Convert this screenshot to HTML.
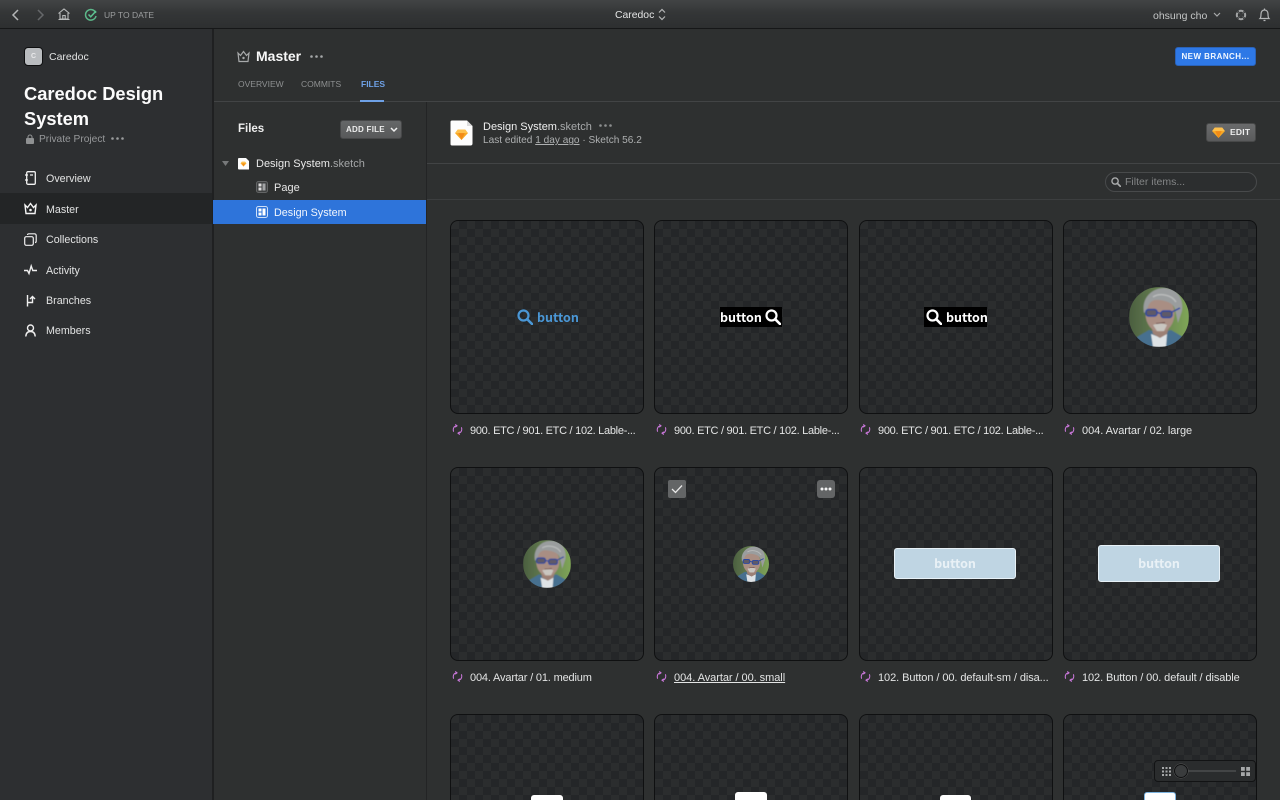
<!DOCTYPE html>
<html lang="en"><head><meta charset="utf-8"><title>Caredoc</title>
<style>
*{box-sizing:border-box}
html,body{margin:0;padding:0;width:1280px;height:800px;overflow:hidden;background:#2e3030}
body{font-family:"Liberation Sans","DejaVu Sans",sans-serif;color:#e8e9e9}
#root{position:relative;width:1280px;height:800px;overflow:hidden;background:#2e3030}
.a{position:absolute;white-space:nowrap}
svg{position:absolute;overflow:visible}
.card{position:absolute;width:194px;height:194px;border-radius:8px;border:1px solid #0f1011;
background-color:#2b2d2e;
background-image:linear-gradient(45deg,#242628 25%,transparent 25%,transparent 75%,#242628 75%),linear-gradient(45deg,#242628 25%,transparent 25%,transparent 75%,#242628 75%);
background-size:16px 16px;background-position:0 0,8px 8px;overflow:hidden}
.r3{height:86px;border-bottom:0;border-radius:8px 8px 0 0}
.lab{position:absolute;font-size:11px;line-height:14px;color:#e4e5e5;white-space:nowrap}
.e{letter-spacing:-.28px}
.nav{font-size:10.700px;color:#e2e3e3;line-height:14px}
.btn{position:absolute;width:122px;background:#bfd5e3;border:1px solid #e7f1f7;border-radius:3px;color:#e9f1f6;font-family:"Noto Sans CJK JP","Liberation Sans",sans-serif;font-weight:bold;font-size:12.500px;text-align:center}
.bt{font-family:"Noto Sans CJK JP","Liberation Sans",sans-serif;font-weight:bold;font-size:12.500px}
.tab{font-size:8.500px;line-height:12px;color:#8e9091}
</style></head><body>
<div id="root">

<svg width="0" height="0" style="position:absolute"><defs>
<linearGradient id="av" x1="0" y1="0" x2="1" y2="0"><stop offset="0" stop-color="#4b5f40"/><stop offset=".5" stop-color="#667f50"/><stop offset="1" stop-color="#7fa657"/></linearGradient>
<clipPath id="cc"><circle cx="30" cy="30" r="30"/></clipPath>
<filter id="soft"><feGaussianBlur stdDeviation=".5"/></filter>
<symbol id="avatar" viewBox="0 0 60 60">
<g clip-path="url(#cc)"><g filter="url(#soft)"><rect width="60" height="60" fill="url(#av)"/>
<path d="M4 60 8 50 20 43 30 46 42 43 54 50 58 60Z" fill="#47708f"/>
<path d="M22 47 30 50 38 47 37 60H24Z" fill="#dfe3e6"/>
<path d="M22 38 24 47 31 51 38 47 41 37Z" fill="#9c8074"/>
<ellipse cx="31" cy="27" rx="14.500" ry="18" fill="#a98e83"/>
<path d="M15 26C12 10 24 1 35 1 47 1 55 10 53 24L49 36 46 22C44 16 38 14 30 13 23 12 19 16 18 24Z" fill="#9a9d9e"/>
<path d="M24 10C30 6 42 7 47 15" stroke="#b9bbbb" stroke-width="1.500" fill="none"/>
<path d="M24 38C29 36 35 36 38 38L35 44 28 44Z" fill="#c9c6c0"/>
<path d="M27 36.500C31 36 34 36 36 35.500" stroke="#6e4b47" stroke-width="1"/>
<rect x="17" y="22.500" width="11" height="6.500" rx="2.500" fill="#5f5a68" stroke="#2b47a0" stroke-width="1.500"/>
<rect x="32" y="24" width="11" height="6.500" rx="2.500" fill="#5f5a68" stroke="#2b47a0" stroke-width="1.500"/>
<path d="M28 25.500 32 26.500M43 25 51 21" stroke="#2b47a0" stroke-width="1.500" fill="none"/></g></g>
</symbol>
<symbol id="sync" viewBox="0 0 12 12"><path d="M1.700 8.500C.7 5 2 2.300 5 2M3.500 .5 5.500 2 3.500 3.500M10.300 3.500C11.300 7 10 9.700 7 10M8.500 8.500 6.500 10 8.500 11.500" fill="none" stroke="#c977d9" stroke-width="1.100"/></symbol>
<symbol id="mag" viewBox="0 0 16 16"><circle cx="6.500" cy="6.500" r="5" fill="none" stroke="currentColor" stroke-width="2.200"/><path d="M10.200 10.200 15 15" stroke="currentColor" stroke-width="2.600" stroke-linecap="round"/></symbol>
<symbol id="gem" viewBox="0 0 14 12"><path d="M3 .5H11L14 4.500 7 12 0 4.500Z" fill="#f7a823"/><path d="M3 .5H11L14 4.500H0Z" fill="#fdc04d"/><path d="M3.500 4.500H10.500L7 12Z" fill="#f28a17"/></symbol>
</defs></svg>

<!-- sidebar tint -->
<div class="a" style="left:0;top:29px;width:212px;height:771px;background:#2d2f31"></div>

<!-- top bar -->
<div class="a" style="left:0;top:0;width:1280px;height:29px;background:linear-gradient(#424445,#343637 45%,#2d2f30);border-bottom:1px solid #161718"></div>
<svg style="left:11px;top:9px" width="9" height="12"><path d="M7 1 2 6 7 11" fill="none" stroke="#b4b6b7" stroke-width="1.500"/></svg>
<svg style="left:36px;top:9px" width="9" height="12"><path d="M2 1 7 6 2 11" fill="none" stroke="#66686a" stroke-width="1.500"/></svg>
<svg style="left:58px;top:8px" width="12" height="12"><path d="M.5 5.500 6 1 11.500 5.500M2 5V11H10V5M4.800 11V7.500H7.200V11M0.500 11.500H11.500" fill="none" stroke="#b8baba" stroke-width="1.100"/></svg>
<svg style="left:85px;top:9px" width="12" height="12"><path d="M10.800 4A5.300 5.300 0 1 0 11 7" fill="none" stroke="#5cb88a" stroke-width="1.500"/><path d="M3.500 5.500 5.700 7.800 11 2" fill="none" stroke="#5cc090" stroke-width="1.500"/></svg>
<div class="a" style="left:104px;top:9px;font-size:8.500px;line-height:12px;color:#9c9e9f;letter-spacing:.02px">UP TO DATE</div>
<div class="a" style="left:615px;top:9px;font-size:10.400px;line-height:14px;color:#e4e5e5">Caredoc</div>
<svg style="left:658px;top:8px" width="8" height="13"><path d="M1 4.500 4 1.500 7 4.500M1 8.500 4 11.500 7 8.500" fill="none" stroke="#b5b7b7" stroke-width="1.200"/></svg>
<div class="a" style="left:1153px;top:9px;font-size:10.500px;line-height:14px;color:#c4c6c6">ohsung cho</div>
<svg style="left:1213px;top:12px" width="8" height="6"><path d="M1 1 4 4 7 1" fill="none" stroke="#a8aaab" stroke-width="1.200"/></svg>
<svg style="left:1235px;top:9px" width="12" height="12"><circle cx="6" cy="6" r="4.200" fill="none" stroke="#a4a6a7" stroke-width="2" stroke-dasharray="4.600 2" stroke-dashoffset="2.300"/><path d="M2.500 2.500 9.500 9.500M9.500 2.500 2.500 9.500" stroke="#6a6c6d" stroke-width=".8"/><circle cx="6" cy="6" r="2" fill="#383a3b"/></svg>
<svg style="left:1259px;top:8px" width="11" height="14"><path d="M1 10.500C2 9.500 2 8 2 6 2 3.500 3.500 2 5.500 2S9 3.500 9 6C9 8 9 9.500 10 10.500Z" fill="none" stroke="#b4b6b7" stroke-width="1.200"/><path d="M4.500 12.500H6.500M5.500 .5V2" stroke="#b4b6b7" stroke-width="1.200"/></svg>

<!-- sidebar -->
<div class="a" style="left:212px;top:29px;width:2px;height:771px;background:#1f2021"></div>
<div class="a" style="left:24px;top:47px;width:19px;height:19px;border-radius:4px;background:#b9bcbf;border:1px solid #0e0f10;font-size:7px;font-weight:bold;color:#e9eaeb;text-align:center;line-height:17px">C</div>
<div class="a" style="left:49px;top:50px;font-size:10.500px;line-height:14px;color:#e2e3e3">Caredoc</div>
<div class="a" style="left:24px;top:82px;font-size:18.300px;line-height:24.500px;font-weight:bold;color:#fbfbfb">Caredoc Design<br>System</div>
<svg style="left:26px;top:134px" width="8" height="10"><path d="M2 4.500V3A2 2 0 0 1 6 3V4.500" fill="none" stroke="#8f9192" stroke-width="1.100"/><rect y="4" width="8" height="6" rx="1" fill="#8f9192"/></svg>
<div class="a" style="left:39px;top:133px;font-size:10.200px;line-height:14px;color:#96989a">Private Project</div>
<svg style="left:111px;top:137px" width="13" height="3"><circle cx="1.500" cy="1.500" r="1.300" fill="#9a9c9d"/><circle cx="6.500" cy="1.500" r="1.300" fill="#9a9c9d"/><circle cx="11.500" cy="1.500" r="1.300" fill="#9a9c9d"/></svg>
<div class="a" style="left:0;top:193px;width:212px;height:31px;background:#232526"></div>

<svg style="left:25px;top:171px" width="11" height="14"><rect x="1.700" y=".7" width="8.600" height="12.600" rx="1.200" fill="none" stroke="#f2f2f2" stroke-width="1.300"/><path d="M0 4H3M0 9H3M5 4H8" stroke="#f2f2f2" stroke-width="1.200"/></svg>
<div class="a nav" style="left:46px;top:172px">Overview</div>
<svg style="left:24px;top:202px" width="13" height="13"><path d="M1 3 3.500 5.500 6.500 1.500 9.500 5.500 12 3 11 11.500H2Z" fill="none" stroke="#f4f4f4" stroke-width="1.400"/><circle cx="6.500" cy="8" r="1.300" fill="#f4f4f4"/></svg>
<div class="a nav" style="left:46px;top:203px">Master</div>
<svg style="left:24px;top:233px" width="13" height="13"><rect x=".7" y="3.700" width="8.600" height="8.600" rx="1.500" fill="none" stroke="#efefef" stroke-width="1.200"/><path d="M3.500 2A1.300 1.300 0 0 1 4.800.8H10.500A1.700 1.700 0 0 1 12.200 2.500V8.200A1.300 1.300 0 0 1 11 9.500" fill="none" stroke="#efefef" stroke-width="1.200"/></svg>
<div class="a nav" style="left:46px;top:233px">Collections</div>
<svg style="left:24px;top:264px" width="13" height="12"><path d="M0 6.500H3.500L5 9.500 7.200 2 8.800 6.500H13" fill="none" stroke="#efefef" stroke-width="1.400"/></svg>
<div class="a nav" style="left:46px;top:264px">Activity</div>
<svg style="left:26px;top:294px" width="11" height="13"><path d="M1.500 1V12.500M1.500 8.500H6.500V3M4 5 6.500 2.500 9 5" fill="none" stroke="#efefef" stroke-width="1.400"/></svg>
<div class="a nav" style="left:46px;top:294px">Branches</div>
<svg style="left:25px;top:324px" width="11" height="13"><circle cx="5.500" cy="4" r="3" fill="none" stroke="#efefef" stroke-width="1.400"/><path d="M.8 12.500C1 9 3 7.500 5.500 7.500S10 9 10.200 12.500" fill="none" stroke="#efefef" stroke-width="1.400"/></svg>
<div class="a nav" style="left:46px;top:324px">Members</div>

<!-- header -->
<svg style="left:237px;top:50px" width="13" height="13"><path d="M1 3 3.500 5.500 6.500 1.500 9.500 5.500 12 3 11 11.500H2Z" fill="none" stroke="#a8aaab" stroke-width="1.200"/><circle cx="6.500" cy="8" r="1.200" fill="#a8aaab"/></svg>
<div class="a" style="left:256px;top:47px;font-size:14px;line-height:18px;font-weight:bold;color:#f8f8f8">Master</div>
<svg style="left:310px;top:55px" width="13" height="3"><circle cx="1.500" cy="1.500" r="1.300" fill="#a6a8a9"/><circle cx="6.500" cy="1.500" r="1.300" fill="#a6a8a9"/><circle cx="11.500" cy="1.500" r="1.300" fill="#a6a8a9"/></svg>
<div class="a tab" style="left:238px;top:78px">OVERVIEW</div>
<div class="a tab" style="left:301px;top:78px">COMMITS</div>
<div class="a tab" style="left:361px;top:78px;color:#6ea1e6;font-weight:bold">FILES</div>
<div class="a" style="left:214px;top:101px;width:1066px;height:1px;background:#424445"></div>
<div class="a" style="left:360px;top:100px;width:24px;height:2px;background:#6ea1e6"></div>
<div class="a" style="left:1175px;top:47px;width:81px;height:19px;border-radius:3px;background:#2e78e6;border:1px solid #2a62b8;color:#f2f7ff;font-size:8px;font-weight:bold;line-height:17px;text-align:center;letter-spacing:.45px">NEW BRANCH...</div>

<!-- files column -->
<div class="a" style="left:426px;top:102px;width:1px;height:698px;background:#232425"></div>
<div class="a" style="left:238px;top:122px;font-size:11.500px;line-height:15px;font-weight:bold;color:#eeeeee">Files</div>
<div class="a" style="left:340px;top:120px;width:62px;height:19px;border-radius:3px;background:linear-gradient(#656768,#58595a);border:1px solid #464748;color:#ececec;font-size:8px;font-weight:bold;line-height:17px;padding-left:5px;letter-spacing:.25px">ADD FILE</div>
<svg style="left:390px;top:127px" width="8" height="6"><path d="M1 1 4 4 7 1" fill="none" stroke="#f0f0f0" stroke-width="1.500"/></svg>
<svg style="left:222px;top:161px" width="7" height="5"><path d="M0 0H7L3.500 5Z" fill="#77797a"/></svg>
<svg style="left:238px;top:157px" width="11" height="13"><path d="M1 1H8L11 4V12.500H1A1 1 0 0 1 0 11.500V2A1 1 0 0 1 1 1Z" fill="#fdfdfd"/><use href="#gem" x="2.500" y="4.500" width="6" height="5"/></svg>
<div class="a" style="left:256px;top:157px;font-size:11px;line-height:14px;color:#eaeaea">Design System<span style="color:#a4a6a7">.sketch</span></div>
<svg style="left:256px;top:181px" width="12" height="12"><rect x=".5" y=".5" width="11" height="11" rx="2" fill="#3f4142" stroke="#636566"/><rect x="2.500" y="2.500" width="3" height="3" fill="#dcdcdc"/><rect x="2.500" y="6.500" width="3" height="3" fill="#dcdcdc"/><rect x="6.500" y="2.500" width="3" height="7" fill="#a2a4a5"/></svg>
<div class="a" style="left:274px;top:181px;font-size:11px;line-height:14px;color:#e6e6e6">Page</div>
<div class="a" style="left:213px;top:200px;width:213px;height:24px;background:#2e74da"></div>
<svg style="left:256px;top:206px" width="12" height="12"><rect x=".5" y=".5" width="11" height="11" rx="2" fill="#2e74da" stroke="#cfe0f7"/><rect x="2.500" y="2.500" width="3" height="3" fill="#fff"/><rect x="2.500" y="6.500" width="3" height="3" fill="#fff"/><rect x="6.500" y="2.500" width="3" height="7" fill="#fff"/></svg>
<div class="a" style="left:274px;top:206px;font-size:10.800px;line-height:14px;color:#f1f6fd">Design System</div>

<!-- file header -->
<svg style="left:450px;top:120px" width="23" height="26"><path d="M2 .5H17L22.500 6V23.500A2 2 0 0 1 20.500 25.500H2A1.500 1.500 0 0 1 .5 24V2A1.500 1.500 0 0 1 2 .5Z" fill="#fdfdfd"/><path d="M17 .5V6H22.500Z" fill="#dcdcdc"/><use href="#gem" x="5" y="9" width="13" height="11"/></svg>
<div class="a" style="left:483px;top:120px;font-size:11px;line-height:14px;color:#efefef">Design System<span style="color:#a8aaab">.sketch</span></div>
<svg style="left:599px;top:124px" width="13" height="3"><circle cx="1.500" cy="1.500" r="1.300" fill="#8d8f90"/><circle cx="6.500" cy="1.500" r="1.300" fill="#8d8f90"/><circle cx="11.500" cy="1.500" r="1.300" fill="#8d8f90"/></svg>
<div class="a" style="left:483px;top:134px;font-size:10.100px;line-height:14px;color:#aeb0b1">Last edited <span style="text-decoration:underline">1 day ago</span> · Sketch 56.2</div>
<div class="a" style="left:1206px;top:123px;width:50px;height:19px;border-radius:3px;background:linear-gradient(#6a6b6c,#5a5b5c);border:1px solid #484949;color:#ededed;font-size:8.500px;font-weight:bold;line-height:17px;padding-left:23px;letter-spacing:.25px">EDIT</div>
<svg style="left:1212px;top:127px" width="13" height="11"><use href="#gem" width="13" height="11"/></svg>
<div class="a" style="left:427px;top:163px;width:853px;height:1px;background:#424445"></div>
<div class="a" style="left:427px;top:199px;width:853px;height:1px;background:#3c3e3f"></div>
<div class="a" style="left:1105px;top:172px;width:152px;height:20px;border-radius:10px;border:1px solid #484a4b;background:#2c2e2f;color:#838586;font-size:10.500px;line-height:18px;padding-left:19px">Filter items...</div>
<svg style="left:1111px;top:177px;color:#aaacad" width="10" height="10"><use href="#mag" width="10" height="10"/></svg>

<!-- row 1 -->
<div class="card" style="left:450px;top:220px"></div>
<svg style="left:517px;top:309px;color:#4a97d6" width="16" height="16"><use href="#mag" width="16" height="16"/></svg>
<div class="a bt" style="left:537px;top:309px;line-height:15px;color:#4a97d6">button</div>
<div class="card" style="left:654px;top:220px"></div>
<div class="a" style="left:720px;top:307px;width:62px;height:20px;background:#000"></div>
<div class="a bt" style="left:720px;top:309px;line-height:15px;color:#fff">button</div>
<svg style="left:765px;top:309px;color:#fff" width="16" height="16"><use href="#mag" width="16" height="16"/></svg>
<div class="card" style="left:859px;top:220px"></div>
<div class="a" style="left:924px;top:307px;width:63px;height:20px;background:#000"></div>
<svg style="left:926px;top:309px;color:#fff" width="16" height="16"><use href="#mag" width="16" height="16"/></svg>
<div class="a bt" style="left:946px;top:309px;line-height:15px;color:#fff">button</div>
<div class="card" style="left:1063px;top:220px"></div>
<svg style="left:1129px;top:287px" width="60" height="60"><use href="#avatar" width="60" height="60"/></svg>

<svg style="left:452px;top:424px" width="11" height="11"><use href="#sync" width="11" height="11"/></svg>
<div class="lab e" style="left:470px;top:424px">900. ETC / 901. ETC / 102. Lable-...</div>
<svg style="left:656px;top:424px" width="11" height="11"><use href="#sync" width="11" height="11"/></svg>
<div class="lab e" style="left:674px;top:424px">900. ETC / 901. ETC / 102. Lable-...</div>
<svg style="left:860px;top:424px" width="11" height="11"><use href="#sync" width="11" height="11"/></svg>
<div class="lab e" style="left:878px;top:424px">900. ETC / 901. ETC / 102. Lable-...</div>
<svg style="left:1064px;top:424px" width="11" height="11"><use href="#sync" width="11" height="11"/></svg>
<div class="lab" style="left:1082px;top:424px;letter-spacing:-.04px">004. Avartar / 02. large</div>

<!-- row 2 -->
<div class="card" style="left:450px;top:467px"></div>
<svg style="left:523px;top:540px" width="48" height="48"><use href="#avatar" width="48" height="48"/></svg>
<div class="card" style="left:654px;top:467px"></div>
<svg style="left:733px;top:546px" width="36" height="36"><use href="#avatar" width="36" height="36"/></svg>
<div class="a" style="left:668px;top:480px;width:18px;height:18px;border-radius:2px;background:#636566"></div>
<svg style="left:671px;top:484px" width="12" height="10"><path d="M1 5 4.500 8.500 11 1.500" fill="none" stroke="#e8e8e8" stroke-width="1.300"/></svg>
<div class="a" style="left:817px;top:480px;width:18px;height:18px;border-radius:3px;background:#636566"></div>
<svg style="left:820px;top:487px" width="12" height="4"><circle cx="2" cy="2" r="1.500" fill="#f2f2f2"/><circle cx="6" cy="2" r="1.500" fill="#f2f2f2"/><circle cx="10" cy="2" r="1.500" fill="#f2f2f2"/></svg>
<div class="card" style="left:859px;top:467px"></div>
<div class="btn" style="left:894px;top:548px;height:31px;line-height:28px">button</div>
<div class="card" style="left:1063px;top:467px"></div>
<div class="btn" style="left:1098px;top:545px;height:37px;line-height:34px">button</div>

<svg style="left:452px;top:671px" width="11" height="11"><use href="#sync" width="11" height="11"/></svg>
<div class="lab" style="left:470px;top:671px;letter-spacing:-.16px">004. Avartar / 01. medium</div>
<svg style="left:656px;top:671px" width="11" height="11"><use href="#sync" width="11" height="11"/></svg>
<div class="lab" style="left:674px;top:671px;text-decoration:underline;letter-spacing:-.05px">004. Avartar / 00. small</div>
<svg style="left:860px;top:671px" width="11" height="11"><use href="#sync" width="11" height="11"/></svg>
<div class="lab" style="left:878px;top:671px;letter-spacing:-.08px">102. Button / 00. default-sm / disa...</div>
<svg style="left:1064px;top:671px" width="11" height="11"><use href="#sync" width="11" height="11"/></svg>
<div class="lab" style="left:1082px;top:671px;letter-spacing:-.09px">102. Button / 00. default / disable</div>

<!-- row 3 -->
<div class="card r3" style="left:450px;top:714px"></div>
<div class="a" style="left:531px;top:795px;width:32px;height:5px;background:#fff;border-radius:3px 3px 0 0"></div>
<div class="card r3" style="left:654px;top:714px"></div>
<div class="a" style="left:735px;top:792px;width:32px;height:8px;background:#fff;border-radius:3px 3px 0 0"></div>
<div class="card r3" style="left:859px;top:714px"></div>
<div class="a" style="left:940px;top:795px;width:31px;height:5px;background:#fff;border-radius:3px 3px 0 0"></div>
<div class="card r3" style="left:1063px;top:714px"></div>
<div class="a" style="left:1144px;top:792px;width:32px;height:8px;background:#fff;border:1px solid #7db4e0;border-bottom:0;border-radius:3px 3px 0 0"></div>

<!-- zoom slider -->
<div class="a" style="left:1154px;top:760px;width:102px;height:22px;border-radius:4px;background:#2a2c2d;border:1px solid #121314"></div>
<svg style="left:1162px;top:767px" width="9" height="9" fill="#a6a8a9"><rect x="0" y="0" width="2" height="2"/><rect x="3.500" y="0" width="2" height="2"/><rect x="7" y="0" width="2" height="2"/><rect x="0" y="3.500" width="2" height="2"/><rect x="3.500" y="3.500" width="2" height="2"/><rect x="7" y="3.500" width="2" height="2"/><rect x="0" y="7" width="2" height="2"/><rect x="3.500" y="7" width="2" height="2"/><rect x="7" y="7" width="2" height="2"/></svg>
<div class="a" style="left:1187px;top:770px;width:49px;height:2px;background:#434546"></div>
<div class="a" style="left:1174px;top:764px;width:14px;height:14px;border-radius:50%;background:#3a3c3d;border:1px solid #0e0f10;box-shadow:0 0 0 .5px #555"></div>
<svg style="left:1241px;top:767px" width="9" height="9" fill="#a6a8a9"><rect width="3.800" height="3.800"/><rect x="5.200" width="3.800" height="3.800"/><rect y="5.200" width="3.800" height="3.800"/><rect x="5.200" y="5.200" width="3.800" height="3.800"/></svg>
</div>
</body></html>
